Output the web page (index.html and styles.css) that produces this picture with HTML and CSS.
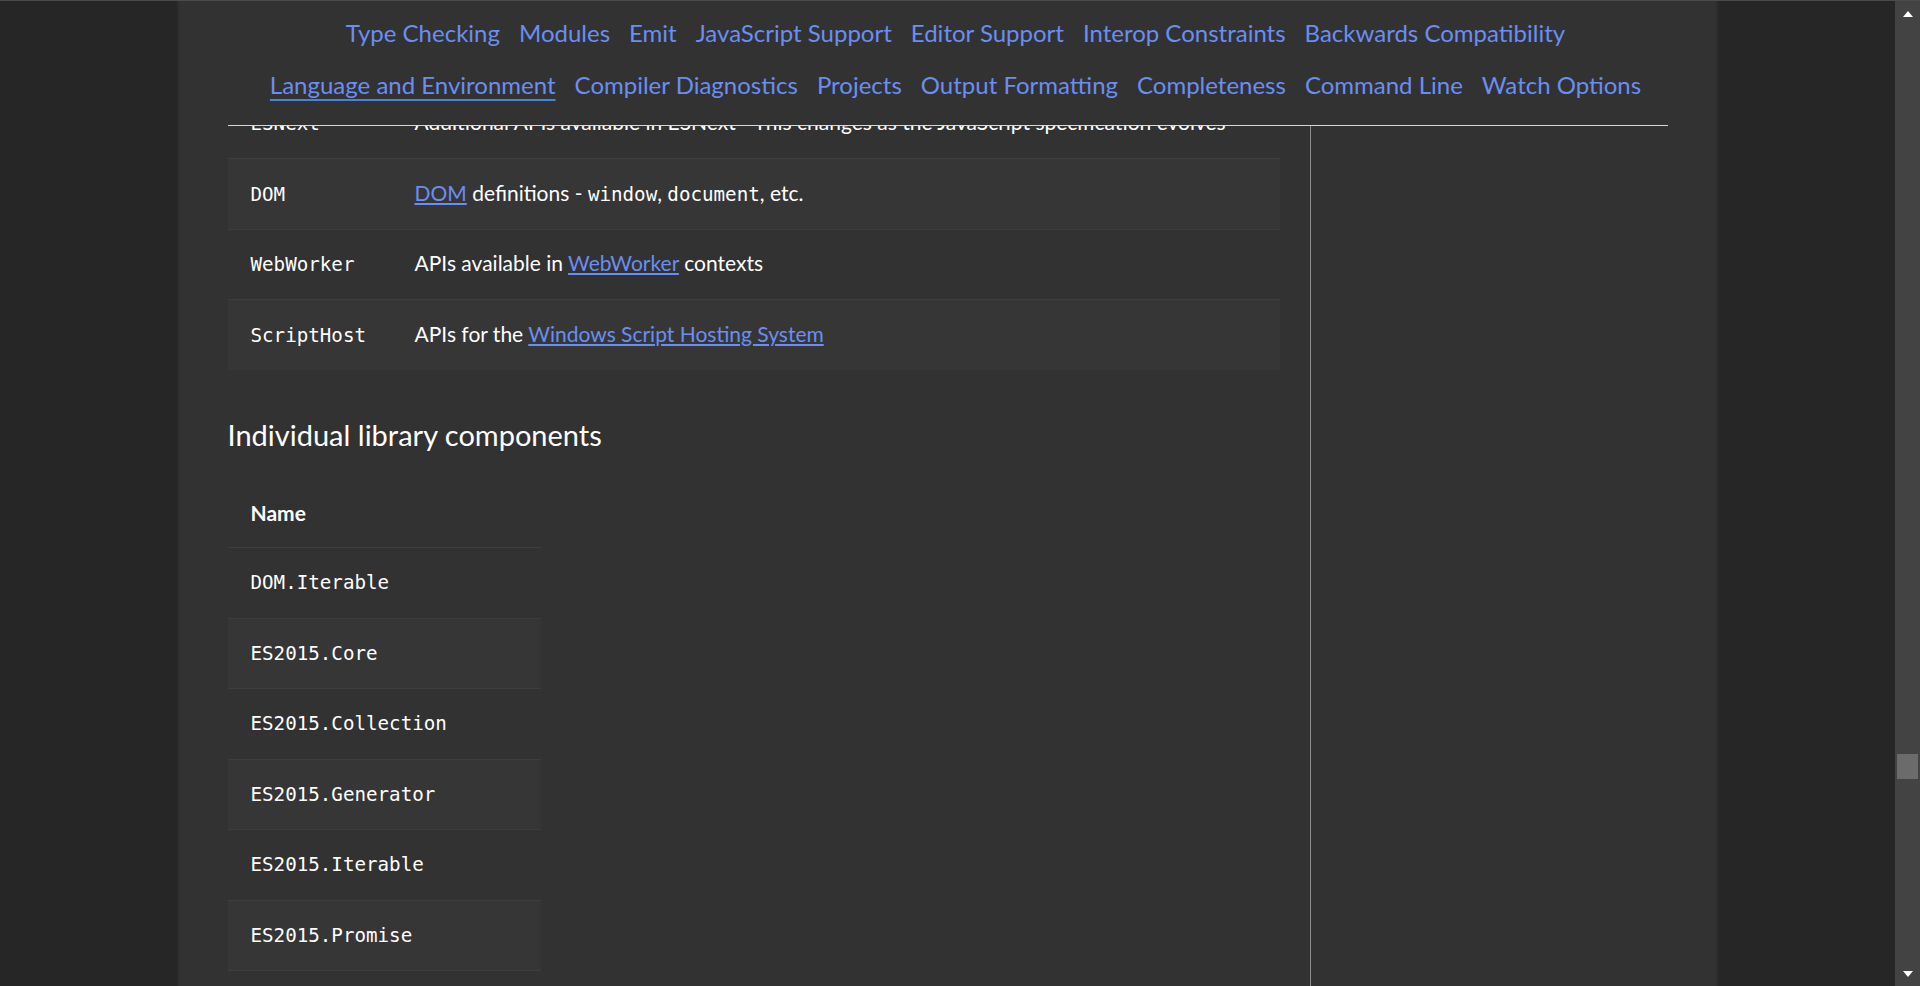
FILE: index.html
```html
<!DOCTYPE html>
<html lang="en">
<head>
<meta charset="utf-8">
<title>TSConfig Reference - lib</title>
<link rel="stylesheet" href="styles.css">
</head>
<body>
<div class="window">
  <div class="page">
    <div class="main">
      <div class="inner">
        <header class="topnav">
          <nav class="nav-row">
            <a class="nav-link" href="#type-checking">Type Checking</a>
            <a class="nav-link" href="#modules">Modules</a>
            <a class="nav-link" href="#emit">Emit</a>
            <a class="nav-link" href="#js">JavaScript Support</a>
            <a class="nav-link" href="#editor">Editor Support</a>
            <a class="nav-link" href="#interop">Interop Constraints</a>
            <a class="nav-link" href="#compat">Backwards Compatibility</a>
          </nav>
          <nav class="nav-row">
            <a class="nav-link active" href="#lang">Language and Environment</a>
            <a class="nav-link" href="#diag">Compiler Diagnostics</a>
            <a class="nav-link" href="#projects">Projects</a>
            <a class="nav-link" href="#output">Output Formatting</a>
            <a class="nav-link" href="#complete">Completeness</a>
            <a class="nav-link" href="#cli">Command Line</a>
            <a class="nav-link" href="#watch">Watch Options</a>
          </nav>
        </header>
        <div class="content">
          <article class="article">
            <table class="lib-table">
              <colgroup><col class="col-name"><col></colgroup>
              <tbody>
                <tr><td><code>ESNext</code></td><td>Additional APIs available in ESNext - This changes as the JavaScript specification evolves</td></tr>
                <tr><td><code>DOM</code></td><td><a class="link" href="#dom">DOM</a> definitions - <code class="inline">window</code>, <code class="inline">document</code>, etc.</td></tr>
                <tr><td><code>WebWorker</code></td><td>APIs available in <a class="link" href="#ww">WebWorker</a> contexts</td></tr>
                <tr><td><code>ScriptHost</code></td><td>APIs for the <a class="link" href="#wsh">Windows Script Hosting System</a></td></tr>
              </tbody>
            </table>
            <h2 class="section-title">Individual library components</h2>
            <table class="lib-table narrow">
              <thead><tr><th>Name</th></tr></thead>
              <tbody>
                <tr><td><code>DOM.Iterable</code></td></tr>
                <tr><td><code>ES2015.Core</code></td></tr>
                <tr><td><code>ES2015.Collection</code></td></tr>
                <tr><td><code>ES2015.Generator</code></td></tr>
                <tr><td><code>ES2015.Iterable</code></td></tr>
                <tr><td><code>ES2015.Promise</code></td></tr>
                <tr><td><code>ES2015.Proxy</code></td></tr>
              </tbody>
            </table>
          </article>
          <aside class="sidebar"></aside>
        </div>
      </div>
    </div>
  </div>
  <div class="scrollbar">
    <span class="sb-arrow up"></span>
    <span class="sb-thumb"></span>
    <span class="sb-spacer"></span>
    <span class="sb-arrow down"></span>
  </div>
</div>
</body>
</html>
```
FILE: styles.css
```css
html, body {
  margin: 0;
  height: 100%;
  overflow: hidden;
}
body {
  background: #262626;
  color: #ffffff;
  font-family: Lato, "Segoe UI", sans-serif;
  border-top: 1px solid #4b4b4b;
  box-sizing: border-box;
}
.window {
  display: flex;
  height: 985px;
}
.page {
  flex: 1;
  display: flex;
  justify-content: center;
}
.main {
  width: 1537px;
  background: #323232;
  border-left: 2px solid #2c2c2c;
  border-right: 2px solid #2c2c2c;
}
.inner {
  width: 1440px;
  height: 100%;
  margin: 0 auto;
  display: flex;
  flex-direction: column;
}
.topnav {
  height: 125px;
  box-sizing: border-box;
  padding-top: 6px;
  border-bottom: 1px solid #d6d6d6;
  flex: none;
}
.nav-row {
  display: flex;
  justify-content: center;
  gap: 19px;
  padding-left: 16px;
  font-size: 24px;
  line-height: 52px;
  white-space: nowrap;
}
.nav-link {
  color: #6a8ef2;
  text-decoration: none;
}
.nav-link.active {
  text-decoration: underline;
  text-decoration-color: #4d7fe0;
  text-decoration-thickness: 2px;
  text-underline-offset: 5px;
}
.content {
  flex: 1;
  min-height: 0;
  display: flex;
  gap: 30px;
  overflow: hidden;
}
.article {
  width: 1052px;
  flex: none;
  margin-top: -38.2px;
}
.sidebar {
  flex: 1;
  border-left: 1px solid #8a8a8a;
}
.lib-table {
  width: 100%;
  border-collapse: collapse;
  font-size: 21px;
}
.lib-table.narrow {
  width: 313px;
}
.col-name {
  width: 164px;
}
.lib-table td,
.lib-table th {
  height: 70.5px;
  box-sizing: border-box;
  padding: 21.3px 23px 24.2px;
  line-height: 24px;
  text-align: left;
  vertical-align: baseline;
}
.lib-table th {
  font-weight: 700;
  padding-top: 24px;
  padding-bottom: 22.5px;
}
.lib-table tbody tr {
  border-top: 1px solid #3e3e3e;
}
.lib-table tbody tr:nth-child(even) {
  background: #363636;
}
code {
  font-family: "DejaVu Sans Mono", "Liberation Mono", monospace;
  font-size: 19.2px;
  line-height: 1;
  color: #ffffff;
}
.link {
  color: #6a8ef2;
  text-decoration: underline;
}
.section-title {
  font-size: 29px;
  font-weight: 400;
  line-height: 34px;
  margin: 47.5px 0 24.7px;
}
.scrollbar {
  width: 25px;
  flex: none;
  background: #434343;
  display: flex;
  flex-direction: column;
  align-items: center;
  padding: 10px 0 9px;
  box-sizing: border-box;
}
.sb-arrow {
  width: 0;
  height: 0;
  border-left: 5.5px solid transparent;
  border-right: 5.5px solid transparent;
}
.sb-arrow.up {
  border-bottom: 6px solid #ffffff;
}
.sb-arrow.down {
  border-top: 6px solid #ffffff;
}
.sb-thumb {
  width: 21px;
  height: 25px;
  margin-top: 737px;
  background: #6b6b6b;
}
.sb-spacer {
  flex: 1;
}
```
